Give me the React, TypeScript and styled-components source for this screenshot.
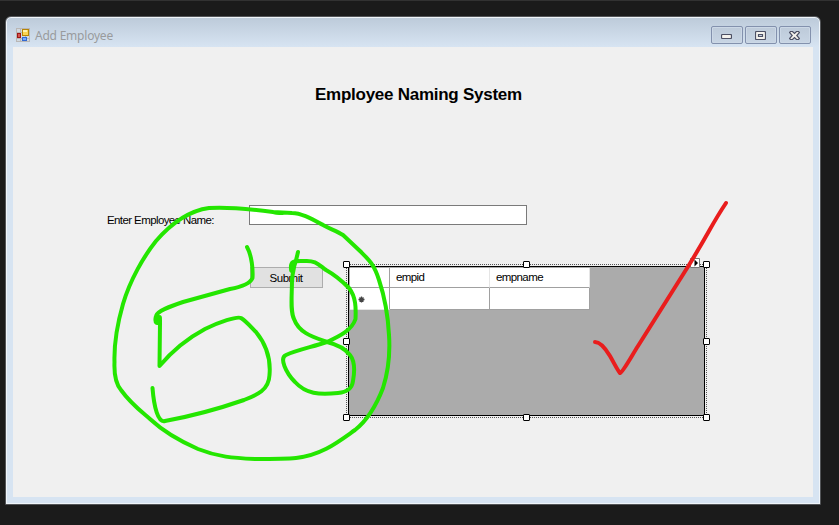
import React from "react";
import styled, { createGlobalStyle } from "styled-components";

const GlobalStyle = createGlobalStyle`
  * { box-sizing: border-box; }
  html, body { margin: 0; padding: 0; background: #1b1b1b; overflow: hidden; }
`;

const Desktop = styled.main`
  position: relative;
  width: 839px;
  height: 525px;
  padding: 15px 18px 20px 5px;
  background: #1b1b1b;
  border-top: 1px solid #323232;
  font-family: "Liberation Sans", Arial, sans-serif;
  color: #000;
`;

const Window = styled.section`
  width: 816px;
  height: 489px;
  padding: 0 7px 6px;
  border: 1px solid #535558;
  border-radius: 6px 6px 0 0;
  box-shadow: inset 0 0 0 1px #f0f5fa;
  background: linear-gradient(#bccad9 0, #d7e4f2 30px);
`;

const TitleBar = styled.header`
  height: 30px;
  padding: 9px 2px 0 2px;
  display: flex;
  align-items: flex-start;
`;

const FormIcon = styled.svg`
  width: 14px;
  height: 14px;
  margin: 2px 5px 0 1px;
`;

const Caption = styled.span`
  flex: 1;
  padding-top: 1px;
  font: 12px/18px "Noto Sans", sans-serif;
  letter-spacing: -0.22px;
  color: #999b9d;
`;

const Controls = styled.div`
  display: flex;
  gap: 2px;
`;

const ControlButton = styled.button<{ $drop?: number }>`
  width: 32px;
  height: 18px;
  padding: ${(p) => p.$drop ?? 0}px 1px 0 0;
  border: 1px solid #8391ad;
  border-radius: 2px;
  box-shadow: inset 0 0 0 1px #ccd8e6;
  background: linear-gradient(#bdcad9, #c8d5e4);
  display: flex;
  align-items: center;
  justify-content: center;

  svg {
    display: block;
    flex: none;
    stroke: #4d5064;
    stroke-width: 1.2;
  }
`;

const Client = styled.div`
  height: 450px;
  width: 800px;
  padding-top: 38px;
  background: #f0f0f0;
`;

const Heading = styled.h1`
  margin: 0 0 101px 302px;
  width: 210px;
  height: 19px;
  font-size: 17px;
  line-height: 19px;
  font-weight: 700;
  letter-spacing: -0.26px;
  white-space: nowrap;
`;

const Form = styled.div`
  display: grid;
  grid-template-columns: 142px 278px;
  grid-template-rows: 20px;
  margin-left: 94px;
`;

const Label = styled.label`
  font-size: 11.5px;
  line-height: 14px;
  padding-top: 8px;
  letter-spacing: -0.6px;
  white-space: nowrap;
`;

const TextBox = styled.input`
  height: 20px;
  width: 278px;
  border: 1px solid #7a7a7a;
  background: #fff;
  padding: 0 3px;
`;

const Lower = styled.div`
  display: flex;
  align-items: flex-start;
  margin: 39px 0 0 237px;
`;

const SubmitButton = styled.button`
  width: 73px;
  height: 21px;
  margin: 3px 23px 0 0;
  padding: 1px 1px 0 0;
  border: 1px solid #adadad;
  background: #e1e1e1;
  color: #000;
  font: 11.5px/17px "Liberation Sans", Arial, sans-serif;
  letter-spacing: -0.5px;
`;

const Selection = styled.div`
  position: relative;
  width: 361px;
  height: 154px;
  padding: 2px;
  background:
    repeating-linear-gradient(90deg, #555 0 1px, #f0f0f0 1px 2px) 0 0 / 100% 1px no-repeat,
    repeating-linear-gradient(90deg, #555 0 1px, #f0f0f0 1px 2px) 0 100% / 100% 1px no-repeat,
    repeating-linear-gradient(#555 0 1px, #f0f0f0 1px 2px) 0 0 / 1px 100% no-repeat,
    repeating-linear-gradient(#555 0 1px, #f0f0f0 1px 2px) 100% 0 / 1px 100% no-repeat;
`;

const Handle = styled.i<{ $x: number; $y: number }>`
  position: absolute;
  left: ${(p) => p.$x - 3}px;
  top: ${(p) => p.$y - 3}px;
  width: 7px;
  height: 7px;
  border: 1px solid #000;
  border-radius: 1px;
  background: #fff;
`;

const TaskGlyph = styled.svg`
  position: absolute;
  left: 344px;
  top: -6px;
  width: 10px;
  height: 10px;
`;

const DataGrid = styled.div`
  width: 357px;
  height: 150px;
  padding: 1px;
  border: 1px solid #000;
  background: #ababab;
`;

const GridRow = styled.div<{ $height: number }>`
  display: grid;
  grid-template-columns: 40px 100px 100px;
  grid-template-rows: 100%;
  width: 240px;
  height: ${(p) => p.$height}px;
`;

const Cell = styled.div<{ $right?: string; $bottom?: string }>`
  padding-left: 6px;
  background: #fff;
  border-right: 1px solid ${(p) => p.$right ?? "#a0a0a0"};
  border-bottom: 1px solid ${(p) => p.$bottom ?? "#a0a0a0"};
  font: 11.5px/19px "Liberation Sans", Arial, sans-serif;
  letter-spacing: -0.6px;
`;

const NewRowMark = styled.svg`
  display: block;
  width: 7px;
  height: 7px;
  margin: 8px 0 0 2px;
`;

const Ink = styled.svg`
  position: absolute;
  left: 0;
  top: -1px;
  width: 839px;
  height: 525px;
  pointer-events: none;
  fill: none;
  stroke-width: 4;
  stroke-linecap: round;
  stroke-linejoin: round;
`;

const handles = [
  [0, 0], [180, 0], [360, 0],
  [0, 77], [360, 77],
  [0, 153], [180, 153], [360, 153],
];

export default function App() {
  return (
    <>
      <GlobalStyle />
      <Desktop>
        <Window>
          <TitleBar>
            <FormIcon viewBox="0 0 14 14" shapeRendering="crispEdges">
              <path d="M.5.5h13v13H.5zM4.5 0v14M0 4.5h14M0 10.5h14M9.5 0v14" fill="#d0d8df" stroke="#b9b6b4" />
              <path d="M1.5 5.5h3v4h-3z" fill="#d55450" stroke="#9f1515" />
              <path d="M6.5 1.5h6v6h-6z" fill="#fdd451" stroke="#b78505" />
              <path d="M7 2h4v2H7z" fill="#fff0aa" />
              <path d="M6.5 9.5h4v3h-4z" fill="#75a9ff" stroke="#3269d2" />
            </FormIcon>
            <Caption>Add Employee</Caption>
            <Controls>
              <ControlButton aria-label="Minimize" $drop={3}>
                <svg width="11" height="5"><rect x=".5" y=".5" width="10" height="4" rx="1" fill="#f4f2ed" /></svg>
              </ControlButton>
              <ControlButton aria-label="Maximize" $drop={1}>
                <svg width="11" height="9"><path d="M1.5.5h8q1 0 1 1v6q0 1-1 1h-8q-1 0-1-1v-6q0-1 1-1z" fill="#f4f2ed" /><path d="M3.500 3.500h4v2h-4z" fill="#c5d2e2" /></svg>
              </ControlButton>
              <ControlButton aria-label="Close" $drop={1}>
                <svg width="11" height="9"><path d="M1.500.5h2l2 2 2-2h2l1 1-2.700 3 2.700 3-1 1h-2l-2-2-2 2h-2l-1-1 2.700-3-2.700-3z" fill="#f4f2ed" /></svg>
              </ControlButton>
            </Controls>
          </TitleBar>
          <Client>
            <Heading>Employee Naming System</Heading>
            <Form>
              <Label htmlFor="employee-name">Enter Employee Name:</Label>
              <TextBox id="employee-name" />
            </Form>
            <Lower>
              <SubmitButton>Submit</SubmitButton>
              <Selection>
                <DataGrid>
                  <GridRow $height={20}>
                    <Cell />
                    <Cell $right="#e5e5e5">empid</Cell>
                    <Cell $right="#e5e5e5">empname</Cell>
                  </GridRow>
                  <GridRow $height={22}>
                    <Cell $bottom="#e5e5e5">
                      <NewRowMark viewBox="0 0 7 7">
                        <path d="M3.500.5v6M.5 3.500h6M1.500 1.500l4 4M5.500 1.500l-4 4" stroke="#444" strokeWidth="1.300" fill="none" />
                      </NewRowMark>
                    </Cell>
                    <Cell />
                    <Cell />
                  </GridRow>
                </DataGrid>
                <TaskGlyph viewBox="0 0 10 10">
                  <path d="M.5.5h9v9h-9z" fill="#fff" stroke="#777" />
                  <path d="M4.500 1.500v7L8 5z" fill="#000" />
                </TaskGlyph>
                {handles.map(([x, y]) => <Handle key={`${x}-${y}`} $x={x} $y={y} />)}
              </Selection>
            </Lower>
          </Client>
        </Window>
        <Ink viewBox="0 0 839 525">
          <g stroke="#24e600">
            <path d="M283 213C278 213 275 213 273 212C250 209 223 207 209 208C187 211 169 226 156 241C144 256 130 280 123 304C117 325 114 345 114.500 362C114 374 116 384 121 390C131 404 142 412 150 419C165 433 182 442 198 449C218 457 233 458 255 459C273 459 286 459 296 458C322 455 338 442 355 430C369 419 378 401 383 388C389 369 390 350 389 335C388 315 384 295 379 280C374 264 369 260 360 251L343 235C337 231 330 229 323 225C310 218 301 213 292 213L273 212" />
            <path d="M247 247C252 256 253 270 252.500 278C250 284 241 287 230 289L183 302C171 306 157 311 156 316C154 324 158 325 159 319C160 315 160 317 160 323L159.500 366C173 350 190 337 205 329C219 322 237 316 241 318C246 321 252 328 256 332C265 343 271 358 269.500 375C269 390 257 395 244 400C218 409 187 417 165 421C158 423 154 407 152.500 388" />
            <path d="M298 252C294 270 291 274 291 269C290 260 295 261 304 261C316 260 319 265 326 270C335 275 343 282 349 288C356 297 356 308 355.500 319C352 330 340 336 327 342C312 347 297 350 286 355C279 358 286 373 295 382C306 394 319 395 338 393C347 392 352 389 353 381C355 370 354 360 350 355C344 347 335 344 327 342C313 337 299 333 294 319C290 311 292 296 292 279C293 271 295 264 295 261" />
          </g>
          <path d="M595 342C601 342 607 351 610 356C614 363 618 371 620 373C623 372 631 357 638 346L689 265Q700 247 709 231Q718 215 726 203" stroke="#e91d1d" />
        </Ink>
      </Desktop>
    </>
  );
}
